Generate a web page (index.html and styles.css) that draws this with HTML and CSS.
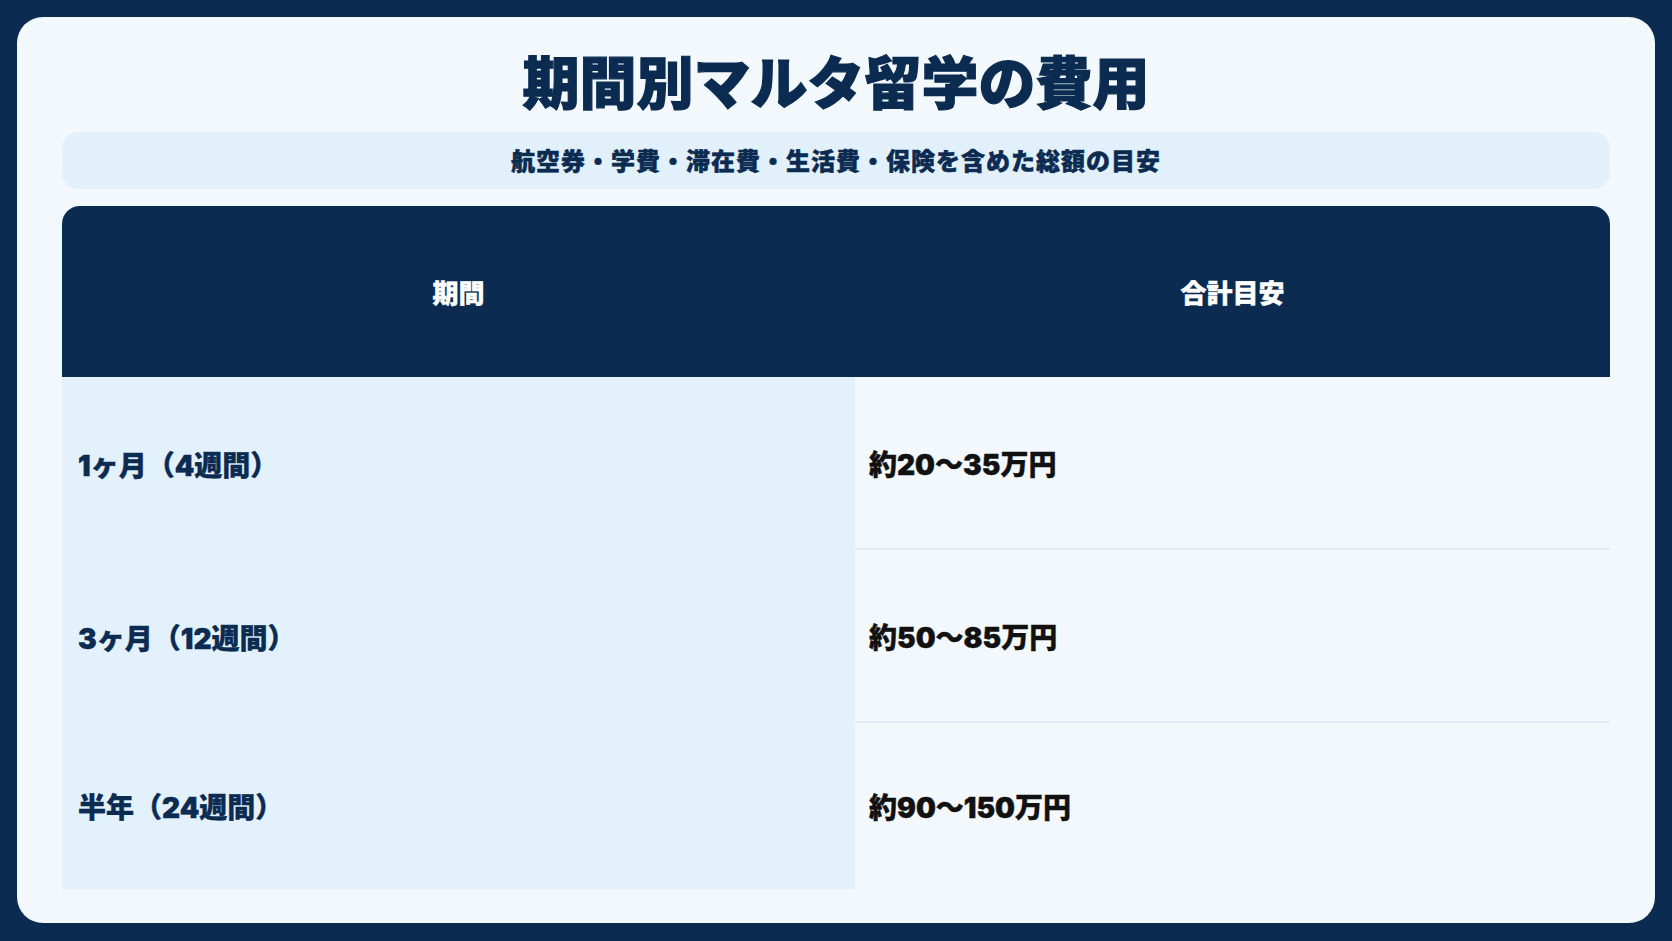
FILE: index.html
```html
<!DOCTYPE html>
<html lang="ja">
<head>
<meta charset="utf-8">
<title>期間別マルタ留学の費用</title>
<link rel="stylesheet" href="styles.css">
</head>
<body>
<main class="card">
  <h1 class="title">期間別マルタ留学の費用</h1>
  <p class="subtitle">航空券・学費・滞在費・生活費・保険を含めた総額の目安</p>
  <div class="table">
    <div class="th">期間</div>
    <div class="th">合計目安</div>
    <div class="td period r1">1ヶ月（4週間）</div>
    <div class="td cost r1 line">約20〜35万円</div>
    <div class="td period r2">3ヶ月（12週間）</div>
    <div class="td cost r2 line">約50〜85万円</div>
    <div class="td period r3">半年（24週間）</div>
    <div class="td cost r3">約90〜150万円</div>
  </div>
</main>
</body>
</html>
```
FILE: styles.css
```css
* { box-sizing: border-box; }
html, body { margin: 0; padding: 0; }
body {
  width: 1672px;
  height: 941px;
  background: #0b2b51;
  padding: 17px 18px 18px 17px;
  font-family: "Noto Sans CJK JP", "Noto Sans", sans-serif;
}
.card {
  width: 1638px;
  height: 906px;
  background: #f3f8fd;
  border-radius: 26px;
  padding: 28px 45px 34px;
  display: flex;
  flex-direction: column;
}
.title {
  margin: 0;
  text-align: center;
  font-size: 57px;
  line-height: 68px;
  font-weight: 900;
  color: #0b2b51;
  -webkit-text-stroke: 1.2px #0b2b51;
}
.subtitle {
  margin: 19px 0 0;
  height: 57px;
  background: #e2f0fc;
  border-radius: 16px;
  display: flex;
  align-items: center;
  justify-content: center;
  padding-bottom: 2px;
  font-size: 24px;
  letter-spacing: 1px;
  font-weight: 900;
  color: #0b2b51;
  -webkit-text-stroke: 0.5px #0b2b51;
}
.table {
  margin-top: 17px;
  display: grid;
  grid-template-columns: 793px 1fr;
  grid-template-rows: 171px 173px 173px 166px;
}
.th {
  background: #0b2b51;
  color: #ffffff;
  font-size: 26px;
  font-weight: 900;
  display: flex;
  align-items: center;
  justify-content: center;
  -webkit-text-stroke: 0.4px #ffffff;
}
.th:first-child { border-top-left-radius: 18px; }
.th:nth-child(2) { border-top-right-radius: 18px; }
.td {
  display: flex;
  align-items: center;
  padding-left: 16px;
  font-family: Inter, "Noto Sans CJK JP", sans-serif;
  font-size: 28px;
  font-weight: 900;
}
.period {
  background: #e3f1fd;
  color: #0b2b51;
  -webkit-text-stroke: 0.4px #0b2b51;
}
.cost {
  color: #111111;
  padding-left: 14px;
  -webkit-text-stroke: 0.4px #111111;
}
.line { border-bottom: 2px solid #e0edf9; }
```
